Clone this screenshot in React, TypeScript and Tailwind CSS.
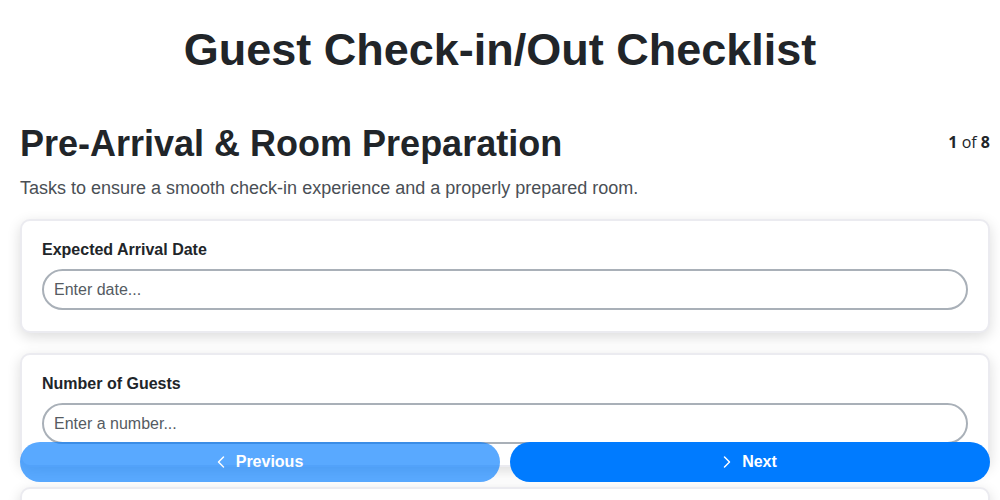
import { ChevronLeft, ChevronRight } from 'lucide-react'

const fields = [
  { label: 'Expected Arrival Date', placeholder: 'Enter date...' },
  { label: 'Number of Guests', placeholder: 'Enter a number...' },
  { label: 'Room Number Assigned', placeholder: 'Enter text...' },
  { label: 'Special Requests', placeholder: 'Enter text...' },
]

function FieldCard({ label, placeholder }: { label: string; placeholder: string }) {
  return (
    <div className="rounded-[10px] border-2 border-[#ebebf0] bg-white px-5 pt-[17px] pb-[21px] shadow-[0_4px_14px_rgba(0,0,0,0.14)]">
      <label className="block text-base leading-6 font-bold text-[#212529]">{label}</label>
      <input
        type="text"
        placeholder={placeholder}
        className="mt-[7px] block h-[41px] w-full rounded-full border-2 border-[#a9b0b8] bg-white px-[10px] text-base text-[#212529] placeholder:text-[#555b62] outline-none"
      />
    </div>
  )
}

export default function App() {
  return (
    <div className="h-[500px] overflow-y-auto bg-white pl-5 pr-[10px] font-['Liberation_Sans',Arial,sans-serif] text-[#212529]">
      <h1 className="-ml-[10px] pt-[24px] text-center text-[45px] leading-[52px] font-bold">
        Guest Check-in/Out Checklist
      </h1>

      <div className="mt-[46px] flex items-start justify-between">
        <h2 className="text-[36px] leading-[44px] font-bold">Pre-Arrival &amp; Room Preparation</h2>
        <div className="pt-[8px] font-['Open_Sans',sans-serif] text-base text-[#212529]">
          <span className="font-bold">1</span> of <span className="font-bold">8</span>
        </div>
      </div>
      <p className="mt-[10px] text-lg leading-6 text-[#4a4f55]">
        Tasks to ensure a smooth check-in experience and a properly prepared room.
      </p>

      <div className="mt-[19px] flex flex-col gap-[20px] pb-10">
        {fields.map((f) => (
          <FieldCard key={f.label} {...f} />
        ))}
      </div>

      <div className="sticky bottom-[18px] flex gap-[10px]">
        <button className="flex h-10 flex-1 items-center justify-center gap-[5px] rounded-full bg-[#007bff] pr-[6px] text-base font-bold text-white opacity-65">
          <ChevronLeft size={20} strokeWidth={1.75} />
          Previous
        </button>
        <button className="flex h-10 flex-1 items-center justify-center gap-[5px] rounded-full bg-[#007bff] pr-[6px] text-base font-bold text-white">
          <ChevronRight size={20} strokeWidth={1.75} />
          Next
        </button>
      </div>
      <div className="h-[200px]" />
    </div>
  )
}
